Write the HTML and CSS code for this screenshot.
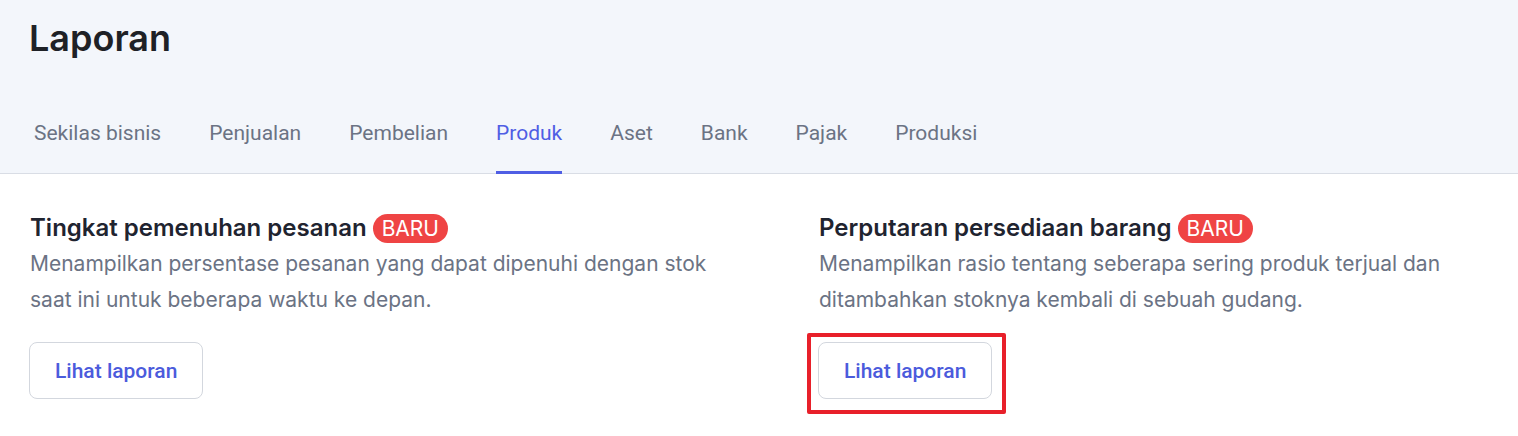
FILE: index.html
```html
<!DOCTYPE html>
<html lang="id">
<head>
<meta charset="utf-8">
<title>Laporan</title>
<link rel="stylesheet" href="styles.css">
</head>
<body>
<header class="page-header">
  <h1 class="page-title">Laporan</h1>
  <nav class="tabs">
    <a class="tab">Sekilas bisnis</a>
    <a class="tab">Penjualan</a>
    <a class="tab">Pembelian</a>
    <a class="tab tab-active">Produk</a>
    <a class="tab">Aset</a>
    <a class="tab">Bank</a>
    <a class="tab">Pajak</a>
    <a class="tab">Produksi</a>
  </nav>
</header>
<main class="reports">
  <section class="report">
    <h2 class="report-title">Tingkat pemenuhan pesanan <span class="badge">BARU</span></h2>
    <p class="report-desc">Menampilkan persentase pesanan yang dapat dipenuhi dengan stok saat ini untuk beberapa waktu ke depan.</p>
    <button class="btn">Lihat laporan</button>
  </section>
  <section class="report">
    <h2 class="report-title">Perputaran persediaan barang <span class="badge">BARU</span></h2>
    <p class="report-desc">Menampilkan rasio tentang seberapa sering produk terjual dan ditambahkan stoknya kembali di sebuah gudang.</p>
    <button class="btn btn-highlight">Lihat laporan</button>
  </section>
</main>
</body>
</html>
```

FILE: styles.css
```css
* { box-sizing: border-box; }
html, body { margin: 0; padding: 0; background: #ffffff; }
body { font-family: Inter, "Noto Sans", sans-serif; min-height: 436px; }

.page-header {
  background: #f3f6fb;
  padding: 16px 0 0 29px;
  border-bottom: 1px solid #d9dde5;
}
.page-title {
  margin: 0;
  font-family: Inter, sans-serif;
  font-weight: 600;
  font-size: 36px;
  line-height: 44px;
  color: #1e2126;
}
.tabs {
  display: flex;
  gap: 48px;
  margin-top: 48px;
  margin-bottom: -1px;
  padding-left: 5px;
}
.tab {
  font-family: Roboto, sans-serif;
  font-size: 21px;
  line-height: 24px;
  color: #6b7384;
  padding: 13px 0 26px;
  border-bottom: 3px solid transparent;
  cursor: pointer;
}
.tab-active {
  color: #4f5ee4;
  border-bottom-color: #4f5ee4;
}

.reports {
  display: grid;
  grid-template-columns: 789px 1fr;
  padding: 39px 0 40px 30px;
}
.report-title {
  margin: 0;
  font-size: 24px;
  font-weight: 600;
  line-height: 30px;
  color: #1f2430;
  display: flex;
  align-items: center;
  gap: 6px;
}
.badge {
  display: inline-block;
  background: #ef4444;
  color: #ffffff;
  font-weight: 400;
  font-size: 21px;
  line-height: 29px;
  padding: 0 9px;
  border-radius: 15px;
}
.report-desc {
  margin: 3px 0 0;
  max-width: 710px;
  font-size: 21px;
  line-height: 36px;
  color: #6b7384;
}
.btn {
  position: relative;
  margin-top: 24px;
  height: 57px;
  padding: 0 25px;
  background: #ffffff;
  border: 1px solid #d3d7de;
  border-radius: 8px;
  font-family: Roboto, sans-serif;
  font-weight: 500;
  font-size: 21px;
  color: #4b5bdc;
  margin-left: -1px;
}
.btn-highlight::after {
  content: "";
  position: absolute;
  top: -10px;
  left: -12px;
  right: -15px;
  bottom: -16px;
  border: 4px solid #e8202a;
  border-radius: 2px;
  pointer-events: none;
}
```
